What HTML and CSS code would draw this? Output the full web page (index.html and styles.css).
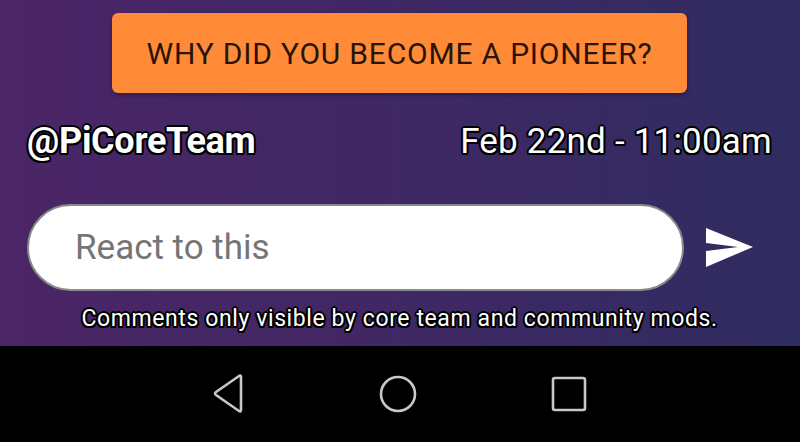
FILE: index.html
```html
<html>
<head>
    <link rel="stylesheet" href="styles.css">
</head>
<body>
    <div class="screen">
        <div class="content">
            <div class="question">WHY DID YOU BECOME A PIONEER?</div>
            <div class="meta">
                <span class="author">@PiCoreTeam</span>
                <span class="date">Feb 22nd - 11:00am</span>
            </div>
            <div class="reply">
                <div class="field">React to this</div>
                <svg class="send" width="50" height="42" viewBox="0 0 50 42">
                    <polygon points="1,1 48,20 1,40 1,24 33,20 1,16" fill="#fff"/>
                </svg>
            </div>
            <p class="note">Comments only visible by core team and community mods.</p>
        </div>
        <div class="navbar">
            <svg width="36" height="40" viewBox="0 0 36 40">
                <path d="M30 3 L30 36 Q30 38 28 37 L5 21 Q3 19.5 5 18 L28 2 Q30 1 30 3 Z" fill="none" stroke="#c8c8c8" stroke-width="2.6" stroke-linejoin="round"/>
            </svg>
            <svg width="40" height="40" viewBox="0 0 40 40">
                <circle cx="20" cy="20" r="17" fill="none" stroke="#c8c8c8" stroke-width="2.6"/>
            </svg>
            <svg width="40" height="40" viewBox="0 0 40 40">
                <rect x="4" y="4" width="32" height="32" rx="2" fill="none" stroke="#c8c8c8" stroke-width="2.6"/>
            </svg>
        </div>
    </div>
</body>
</html>
```

FILE: styles.css
```css
body{
    margin:0;
    font-family:Roboto, "Liberation Sans", sans-serif;
}
.screen{
    width:800px;
    height:442px;
    display:flex;
    flex-direction:column;
}
.content{
    height:346px;
    background:linear-gradient(to right, #4b2567 0%, #3f2864 50%, #2f2c60 100%);
    padding:13px 28px 0 27px;
    box-sizing:border-box;
}
.question{
    width:575px;
    height:80px;
    margin:0 auto;
    box-sizing:border-box;
    background-color:#ff8b38;
    border-radius:6px;
    box-shadow:0 2px 4px rgba(0,0,0,0.35);
    display:flex;
    align-items:center;
    justify-content:center;
    font-size:30px;
    color:#2a1408;
    letter-spacing:0.8px;
}
.meta{
    display:flex;
    justify-content:space-between;
    align-items:center;
    margin-top:22px;
    height:52px;
    color:#fff;
    font-size:35px;
}
.author,.date,.note{
    text-shadow:
        2px 0 0 #000, -2px 0 0 #000, 0 2px 0 #000, 0 -2px 0 #000,
        1.5px 1.5px 0 #000, -1.5px 1.5px 0 #000, 1.5px -1.5px 0 #000, -1.5px -1.5px 0 #000;
}
.author{
    font-weight:bold;
    font-size:36px;
    letter-spacing:-0.3px;
}
.date{
    letter-spacing:0.2px;
}
.reply{
    display:flex;
    align-items:center;
    margin-top:37px;
}
.field{
    width:657px;
    height:87px;
    box-sizing:border-box;
    border:2px solid #8a8a8a;
    border-radius:44px;
    background:#fff;
    color:#757575;
    font-size:35px;
    padding-left:46px;
    display:flex;
    align-items:center;
}
.send{
    margin-left:21px;
}
.note{
    margin:14px 0 0;
    text-align:center;
    color:#fff;
    font-size:23px;
    letter-spacing:0.6px;
}
.navbar{
    flex:1;
    background:#000;
    display:flex;
    align-items:center;
    justify-content:center;
    gap:131px;
}
```
